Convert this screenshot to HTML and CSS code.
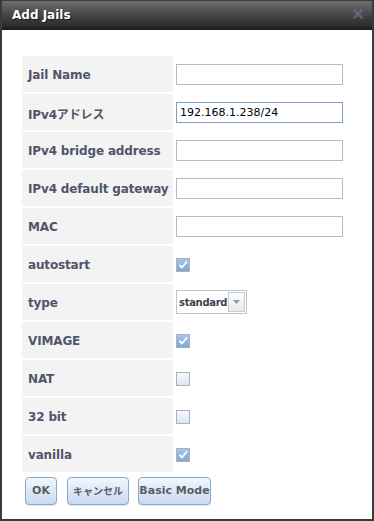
FILE: index.html
```html
<!DOCTYPE html>
<html>
<head>
<meta charset="utf-8">
<link rel="stylesheet" href="styles.css">
</head>
<body>
<div class="dialog">
  <div class="titlebar">
    <span class="title">Add Jails</span>
    <span class="close">
      <svg width="10" height="10" viewBox="0 0 10 10"><path d="M1.5 1.5 L8.5 8.5 M8.5 1.5 L1.5 8.5" stroke="#5b6775" stroke-width="2.6" stroke-linecap="square"/></svg>
    </span>
  </div>
  <div class="content">
    <div class="form">
      <div class="label">Jail Name</div><div class="field"><input class="text" type="text"></div>
      <div class="label">IPv4アドレス</div><div class="field"><input class="text focus" type="text" value="192.168.1.238/24"></div>
      <div class="label">IPv4 bridge address</div><div class="field"><input class="text" type="text"></div>
      <div class="label">IPv4 default gateway</div><div class="field"><input class="text" type="text"></div>
      <div class="label">MAC</div><div class="field"><input class="text" type="text"></div>
      <div class="label">autostart</div><div class="field"><span class="cb checked"><svg width="12" height="12" viewBox="0 0 12 12"><path d="M2.5 6 L5 8.5 L10 2.5" fill="none" stroke="#ffffff" stroke-width="1.8"/></svg></span></div>
      <div class="label">type</div><div class="field"><span class="select"><span class="sel-text">standard</span><span class="sel-btn"><svg width="7" height="4" viewBox="0 0 7 4"><path d="M0 0 H7 L3.5 4 Z" fill="#8a9bb5"/></svg></span></span></div>
      <div class="label">VIMAGE</div><div class="field"><span class="cb checked"><svg width="12" height="12" viewBox="0 0 12 12"><path d="M2.5 6 L5 8.5 L10 2.5" fill="none" stroke="#ffffff" stroke-width="1.8"/></svg></span></div>
      <div class="label">NAT</div><div class="field"><span class="cb"></span></div>
      <div class="label">32 bit</div><div class="field"><span class="cb"></span></div>
      <div class="label">vanilla</div><div class="field"><span class="cb checked"><svg width="12" height="12" viewBox="0 0 12 12"><path d="M2.5 6 L5 8.5 L10 2.5" fill="none" stroke="#ffffff" stroke-width="1.8"/></svg></span></div>
    </div>
    <div class="buttons">
      <button class="btn btn-ok">OK</button>
      <button class="btn btn-cancel">キャンセル</button>
      <button class="btn btn-basic">Basic Mode</button>
    </div>
  </div>
</div>
</body>
</html>
```

FILE: styles.css
```css
html, body {
  margin: 0;
  padding: 0;
  background: #ffffff;
}
body {
  width: 374px;
  height: 521px;
  overflow: hidden;
  font-family: "DejaVu Sans", "Noto Sans CJK JP", sans-serif;
}
.dialog {
  box-sizing: border-box;
  width: 374px;
  height: 521px;
  border: 2px solid #3b3b3b;
  border-top-width: 1px;
  background: #ffffff;
  display: flex;
  flex-direction: column;
}
.titlebar {
  height: 29px;
  box-sizing: border-box;
  background: linear-gradient(#6e6e6e, #3a3a3a 70%, #2b2b2b);
  border-bottom: 3px solid #1f1f1f;
  display: flex;
  align-items: center;
  justify-content: space-between;
  padding: 0 9px 0 10px;
}
.title {
  color: #ffffff;
  font-weight: bold;
  font-size: 12px;
  text-shadow: 1px 1px 0 #1a1a1a;
  margin-top: 1px;
}
.close {
  display: flex;
  margin-top: -1px;
}
.content {
  flex: 1;
  padding: 26px 29px 0 20px;
}
.form {
  display: grid;
  grid-template-columns: 151px 1fr;
  grid-auto-rows: 36px;
  row-gap: 2px;
  column-gap: 3px;
}
.label {
  background: #f3f3f3;
  display: flex;
  align-items: center;
  padding: 2px 0 0 6px;
  font-size: 12px;
  font-weight: bold;
  color: #50556a;
  letter-spacing: -0.15px;
  white-space: nowrap;
}
.field {
  display: flex;
  align-items: center;
}
.text {
  box-sizing: border-box;
  width: 167px;
  height: 21px;
  margin: 1px 0 0 0;
  border: 1px solid #b4bccb;
  padding: 0 3px;
  font-family: "DejaVu Sans", sans-serif;
  font-size: 11px;
  color: #000;
  outline: none;
  background: #fff;
}
.text.focus {
  border-color: #7c9ec4;
}
.cb {
  box-sizing: border-box;
  width: 14px;
  height: 14px;
  border: 1px solid #a6b2c3;
  background: linear-gradient(#f7f9fc, #dfe7f1);
  display: flex;
  align-items: center;
  justify-content: center;
  margin-top: 1px;
}
.cb.checked {
  background: linear-gradient(#a9c6e6, #7fa6d4);
}
.select {
  box-sizing: border-box;
  height: 24px;
  width: 71px;
  border: 1px solid #c0c4cc;
  display: flex;
  align-items: stretch;
  background: #fff;
}
.sel-text {
  font-size: 10px;
  font-weight: bold;
  color: #3d414d;
  display: flex;
  align-items: center;
  padding-left: 2px;
  width: 48px;
  letter-spacing: -0.3px;
}
.sel-btn {
  flex: 1;
  border: 1px solid #c8ccd3;
  margin: 1px;
  background: linear-gradient(#fdfdfd, #eaeaea);
  display: flex;
  align-items: center;
  justify-content: center;
}
.buttons {
  display: flex;
  gap: 10px;
  padding: 5px 0 0 3px;
}
.btn {
  height: 28px;
  box-sizing: border-box;
  border: 1px solid #87a9cf;
  border-radius: 4px;
  background: linear-gradient(#f2f7fd, #c6daf1);
  font-family: "DejaVu Sans", "Noto Sans CJK JP", sans-serif;
  font-weight: bold;
  font-size: 11px;
  color: #585d66;
  padding: 0 0 2px 0;
  box-shadow: 0 1px 1px rgba(0,0,0,0.1);
}
.btn-ok { width: 32px; }
.btn-cancel { width: 62px; font-size: 10px; margin-right: -1px; }
.btn-basic { width: 73px; }
```
